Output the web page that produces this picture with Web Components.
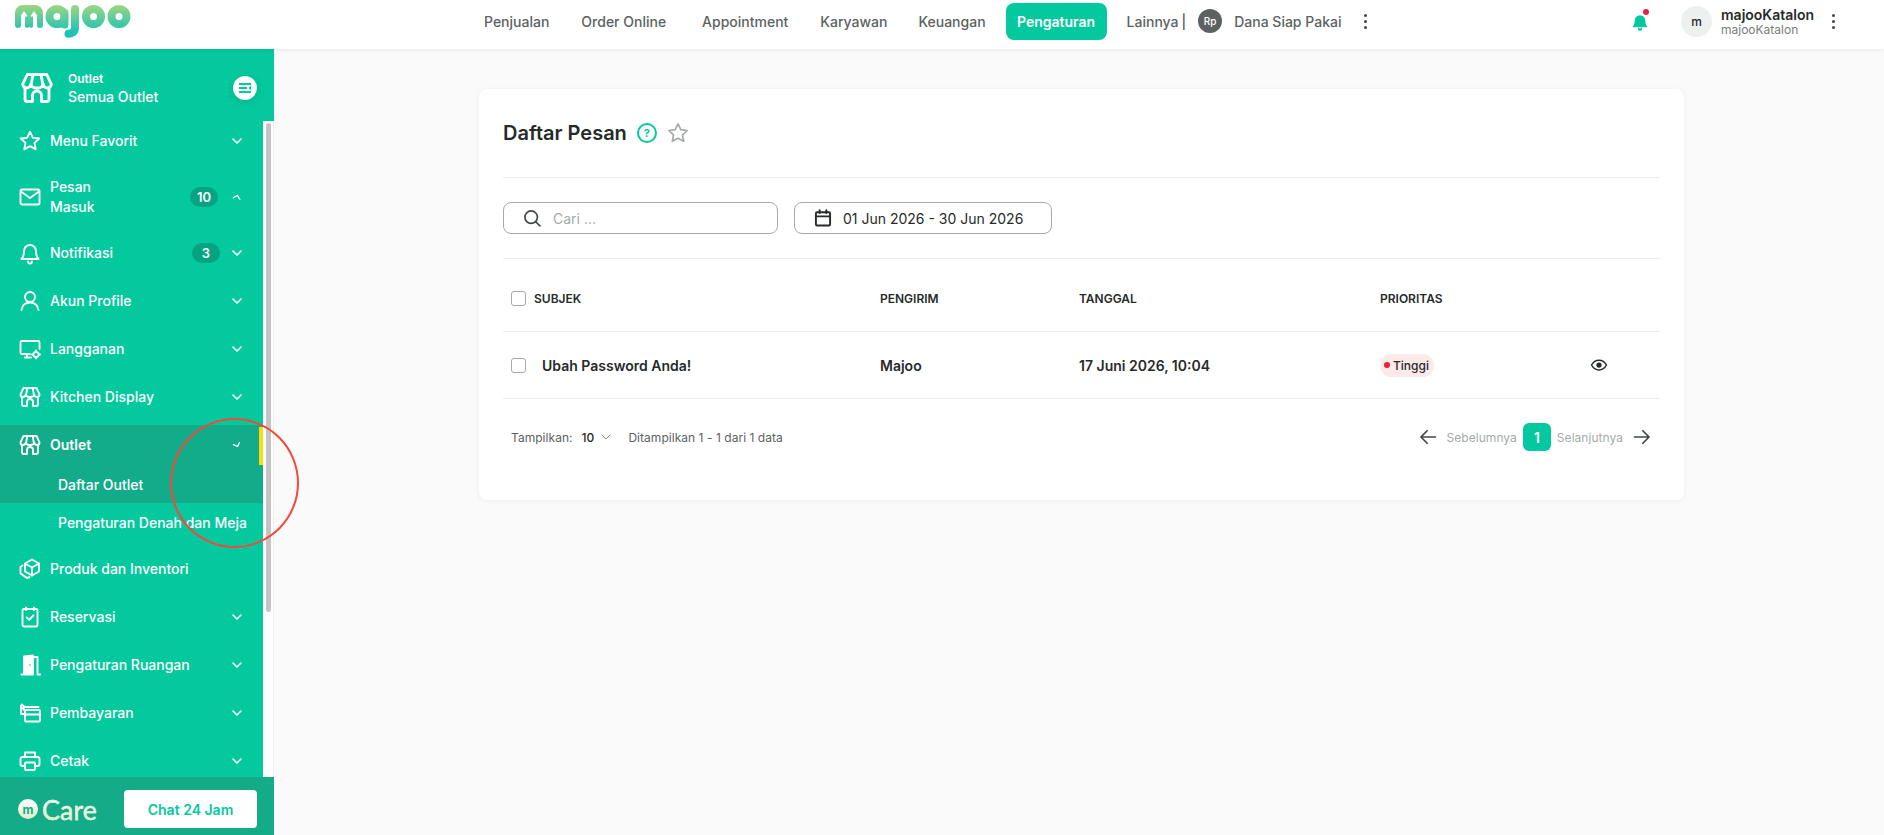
<!DOCTYPE html>
<html lang="id">
<head>
<meta charset="utf-8">
<title>Daftar Pesan</title>
<style>
  html, body { margin: 0; height: 100%; background: #fafafa; overflow: hidden; }
  body { font-family: Inter, "Liberation Sans", sans-serif; color: #272a2a; }
  #app { position: relative; width: 1884px; height: 835px; display: flex; flex-direction: column; overflow: hidden; }
  #body { display: flex; flex: 1; min-height: 0; }
</style>
</head>
<body>
<div id="app">
  <mj-header></mj-header>
  <div id="body">
    <mj-sidebar></mj-sidebar>
    <mj-content>
      <mj-message-card></mj-message-card>
    </mj-content>
  </div>
  <mj-annotation></mj-annotation>
</div>

<script>
const ICONS = {
  store: '<path d="M5.500 3h13l3 6.400c0 1.500-1.200 2.600-2.500 2.600s-2.600-1-2.800-2.600c-.2 1.600-2 2.600-3.200 2.600h-2c-1.200 0-3-1-3.200-2.600C7.600 11 6.300 12 5 12S2.500 10.900 2.500 9.400z"/><path d="M9.300 3 8.200 9.400M14.700 3l1.100 6.400"/><path d="M4 12v7.500A1.500 1.500 0 0 0 5.500 21H9v-4a3 3 0 0 1 6 0v4h3.500a1.500 1.500 0 0 0 1.500-1.500V12"/>',
  star: '<path d="m12 2.800 2.800 5.900 6.400.8-4.700 4.400 1.200 6.400L12 17.200l-5.700 3.100 1.200-6.400-4.700-4.400 6.400-.8z"/>',
  mail: '<rect x="2.500" y="4.500" width="19" height="15" rx="1.800"/><path d="m3 6.500 9 6.500 9-6.500"/>',
  bell: '<path d="M6 10a6 6 0 0 1 12 0c0 5 1 6.500 2.500 8h-17C5 16.500 6 15 6 10z"/><path d="M10 20.500a2 2 0 0 0 4 0"/>',
  bellfill: '<path fill="currentColor" d="M6 10a6 6 0 0 1 12 0c0 5 1 6.500 2.500 8h-17C5 16.500 6 15 6 10z"/><path fill="currentColor" d="M10 20.500a2 2 0 0 0 4 0"/>',
  user: '<circle cx="12" cy="8" r="5"/><path d="M3.500 21c.5-4.500 4-7.500 8.500-7.500s8 3 8.500 7.500"/>',
  monitor: '<path d="M12 17H4a1.500 1.500 0 0 1-1.500-1.500v-10A1.500 1.500 0 0 1 4 4h16a1.500 1.500 0 0 1 1.500 1.500V12"/><path d="M7 20.500h6M9 17v3.500"/><circle cx="18" cy="17.500" r="2.600"/><path d="M18 13.500v1.400M18 20.100v1.400M14 17.500h1.400M20.600 17.500H22"/>',
  box: '<path d="M14 2.500 21 6.500v8L14 18.500l-7-4v-8z"/><path d="m7 6.500 7 4 7-4M14 10.500v8"/><path d="M4.500 8.500 2.500 10v6.500L9 21l2.500-1"/>',
  clipboard: '<rect x="4.500" y="4" width="15" height="17.500" rx="1.500"/><path d="M8 2.500V5M16 2.500V5"/><path d="m8.800 12.500 2.400 2.400 4.200-4.400"/>',
  door: '<path d="M3.500 21.500h2.500V3.500L15 2.500v19H4" fill="currentColor"/><path d="M15 4h4.500v17.500H22"/><circle cx="12" cy="12" r=".8" fill="#04c99e" stroke="none"/>',
  pay: '<path d="M6 9V6h14.500M3 9l3-3.500L4 3.500"/><path d="M3 4.500v8.500h3"/><rect x="7" y="9" width="15" height="11.500" rx="1"/><path d="M7 13.500h15"/>',
  print: '<path d="M7 8V3.500h10V8"/><path d="M7 17H4.500A2 2 0 0 1 2.500 15v-5a2 2 0 0 1 2-2h15a2 2 0 0 1 2 2v5a2 2 0 0 1-2 2H17"/><rect x="7" y="13.500" width="10" height="7.500" rx="1"/>',
  chevron: '<path d="m6 9 6 6 6-6"/>',
  search: '<circle cx="11" cy="11" r="7.500"/><path d="m16.500 16.500 5 5"/>',
  calendar: '<rect x="3.500" y="5" width="17" height="16" rx="1.500"/><path d="M3.500 10h17M8 2.500V6M16 2.500V6"/>',
  eye: '<path d="M2 12c2.500-4.500 6-6.500 10-6.500s7.500 2 10 6.500c-2.500 4.500-6 6.500-10 6.500S4.500 16.500 2 12z"/><circle cx="12" cy="12" r="2.500" fill="currentColor"/>',
  left: '<path d="M21 12H3.500M11 4.500 3.500 12l7.500 7.500"/>',
  right: '<path d="M3 12h17.500M13 4.500l7.500 7.500-7.500 7.500"/>'
};

class MjIcon extends HTMLElement {
  constructor() {
    super();
    this.shadowDOM = this.attachShadow({ mode: "open" });
  }

  connectedCallback() {
    const size = this.getAttribute("size") || 24;
    const stroke = this.getAttribute("stroke") || 2;
    this.shadowDOM.innerHTML = `
      <style>
        :host { display: inline-flex; flex: none; width: ${size}px; height: ${size}px; }
        svg { width: 100%; height: 100%; display: block; }
      </style>
      <svg viewBox="0 0 24 24" fill="none" stroke="currentColor" stroke-width="${stroke}" stroke-linecap="round" stroke-linejoin="round">${ICONS[this.getAttribute("name")] || ""}</svg>`;
  }
}
customElements.define("mj-icon", MjIcon);

class MjHeader extends HTMLElement {
  constructor() {
    super();
    this.shadowDOM = this.attachShadow({ mode: "open" });
    this.shadowDOM.innerHTML = `
      <style>
        :host {
          display: flex; flex: none; align-items: center; height: 49px; background: #fff;
          box-shadow: 0 1px 4px rgba(0,0,0,.07); position: relative; z-index: 2;
          font: 500 14px Inter, "Liberation Sans", sans-serif; color: #5c6262;
        }
        .logo { width: 116px; height: 33px; align-self: flex-start; margin: 5px 0 0 15px; flex: none; }
        nav { display: flex; align-items: center; margin-left: 353px; margin-top: -7px; white-space: nowrap; }
        .on { background: #04c99e; color: #fff; font-weight: 600; width: 101px; height: 37px; border-radius: 8px; display: flex; align-items: center; justify-content: center; }
        .bar { color: #272a2a; font-weight: 400; margin-left: 3px; }
        .rp { width: 24px; height: 24px; border-radius: 50%; background: #5c6262; color: #fff; font-size: 10px; display: flex; align-items: center; justify-content: center; margin-left: 12px; }
        .dots { display: flex; flex-direction: column; gap: 3px; color: #404545; }
        .dots i { width: 3px; height: 3px; border-radius: 50%; background: currentColor; display: block; }
        .right { margin-left: auto; display: flex; align-items: center; margin-top: -6px; padding-right: 49px; }
        .bell { position: relative; color: #04c99e; width: 18px; height: 18px; margin-right: 32px; }
        .bell b { position: absolute; right: 0; top: -4px; width: 6px; height: 6px; border-radius: 50%; background: #e8223c; }
        .avatar { width: 31px; height: 31px; border-radius: 50%; background: #eef0f0; color: #272a2a; font-size: 12px; display: flex; align-items: center; justify-content: center; }
        .who { margin-left: 9px; line-height: 15px; width: 97px; }
        .who div { color: #272a2a; font-weight: 600; }
        .who small { display: block; font-size: 12px; font-weight: 400; color: #777d7d; }
        .right .dots { margin-left: 14px; }
      </style>
      <svg class="logo" viewBox="0 0 116 33">
        <defs><linearGradient id="lg" gradientUnits="userSpaceOnUse" x1="0" y1="0" x2="0" y2="26"><stop offset="0" stop-color="#9ed680"/><stop offset="1" stop-color="#1fc3b5"/></linearGradient></defs>
        <path d="M0 20V8a8 8 0 0 1 8-8h12a8 8 0 0 1 8 8v12a3 3 0 0 1-6 0v-9a3 3 0 0 0-3 0v9a3 3 0 0 1-5 2 3 3 0 0 1-5-2v-9a3 3 0 0 0-3 0v9a3 3 0 0 1-6 0z" fill="url(#lg)"/>
        <path d="M9 22V9M6.300 11.500 9 7.800l2.700 3.700M19 22V9M16.300 11.500 19 7.800l2.700 3.700" fill="none" stroke="#fff" stroke-width="2"/>
        <g fill="none" stroke="url(#lg)" stroke-width="8" stroke-linecap="round">
          <circle cx="42" cy="11.500" r="7.500"/><path d="M49.500 8v11.500"/>
          <path d="M60 4v19c0 3.500-2.500 5.500-6.500 5.700"/>
          <circle cx="78.500" cy="11.500" r="7.500"/><circle cx="104" cy="11.500" r="7.500"/>
        </g>
      </svg>
      <nav>
        <span>Penjualan</span>
        <span style="margin-left:32px">Order Online</span>
        <span style="margin-left:36px">Appointment</span>
        <span style="margin-left:32px">Karyawan</span>
        <span style="margin-left:31px">Keuangan</span>
        <span class="on" style="margin-left:20px">Pengaturan</span>
        <span style="margin-left:20px">Lainnya</span>
        <span class="bar">|</span>
        <span class="rp">Rp</span>
        <span style="margin-left:12px">Dana Siap Pakai</span>
        <span class="dots" style="margin-left:23px"><i></i><i></i><i></i></span>
      </nav>
      <div class="right">
        <span class="bell"><mj-icon name="bellfill" size="18" stroke="2"></mj-icon><b></b></span>
        <span class="avatar">m</span>
        <div class="who"><div>majooKatalon</div><small>majooKatalon</small></div>
        <span class="dots"><i></i><i></i><i></i></span>
      </div>`;
  }
}
customElements.define("mj-header", MjHeader);

class MjNavItem extends HTMLElement {
  constructor() {
    super();
    this.shadowDOM = this.attachShadow({ mode: "open" });
  }

  connectedCallback() {
    const badge = this.getAttribute("badge");
    const chev = this.getAttribute("chevron") || "down";
    const turn = { down: "none", up: "rotate(195deg) scale(.85)", half: "rotate(-20deg) scale(.8)" }[chev];
    const shift = badge && badge.length === 1 ? "margin-right:-2px" : "";
    this.shadowDOM.innerHTML = `
      <style>
        :host {
          display: flex; align-items: center; min-height: 40px; padding-left: 18px; position: relative;
          color: #fff; font-size: 14px; font-weight: 500; line-height: 20px;
        }
        :host([active]) { font-weight: 600; }
        .label { margin-left: 8px; width: var(--label-w, auto); }
        .end { margin-left: auto; display: flex; align-items: center; }
        .badge { background: #06a383; border-radius: 10px; height: 20px; width: 28px; font-size: 13px; font-weight: 600; display: flex; align-items: center; justify-content: center; }
        .chev { margin: 0 18px 0 11px; transform: ${turn}; }
        .mark { position: absolute; right: 0; top: 2px; bottom: 0; width: 4px; background: #f6dd0e; }
      </style>
      <mj-icon name="${this.getAttribute("icon")}" size="24" stroke="1.900"></mj-icon>
      <span class="label"><slot></slot></span>
      <span class="end">
        ${badge ? `<span class="badge" style="${shift}">${badge}</span>` : ""}
        ${chev === "none" ? "" : `<mj-icon class="chev" name="chevron" size="16" stroke="2.400"></mj-icon>`}
      </span>
      ${this.hasAttribute("active") ? '<span class="mark"></span>' : ""}`;
  }
}
customElements.define("mj-nav-item", MjNavItem);

class MjNavSub extends HTMLElement {
  constructor() {
    super();
    this.attachShadow({ mode: "open" }).innerHTML = `
      <style>
        :host { display: flex; align-items: center; height: 38px; padding-left: 58px; color: #fff; font-size: 14px; font-weight: 500; white-space: nowrap; }
      </style>
      <slot></slot>`;
  }
}
customElements.define("mj-nav-sub", MjNavSub);

class MjSidebar extends HTMLElement {
  constructor() {
    super();
    this.shadowDOM = this.attachShadow({ mode: "open" });
    this.shadowDOM.innerHTML = `
      <style>
        :host { display: flex; flex: none; flex-direction: column; width: 274px; background: #04c99e; color: #fff; font-size: 14px; }
        .outlet { display: flex; align-items: center; height: 72px; flex: none; padding: 5px 17px 0 19px; box-sizing: border-box; }
        .outlet .txt { margin-left: 13px; line-height: 18px; font-weight: 500; }
        .outlet small { display: block; font-size: 12px; font-weight: 600; }
        .toggle { margin-left: auto; width: 24px; height: 24px; border-radius: 50%; background: #fff; box-shadow: 0 2px 8px rgba(0,0,0,.12); display: flex; align-items: center; justify-content: center; }
        .middle { flex: 1; min-height: 0; display: flex; }
        .list { width: 263px; flex: none; overflow: hidden; display: flex; flex-direction: column; gap: 8px; }
        .list > * { flex: none; }
        .strip { flex: 1; background: #fff; padding: 2px 2px 0 3px; border-right: 1px solid #eee; }
        .thumb { height: 489px; background: #c4c4c4; border-radius: 3px; }
        .sel { background: #12ac8a; }
        .foot { flex: none; height: 58px; box-sizing: border-box; background: #14ab89; display: flex; align-items: center; padding: 6px 17px 0 18px; }
        .care { display: flex; align-items: center; }
        .m { width: 20px; height: 20px; border-radius: 50%; background: linear-gradient(#fff, #dcefc8); color: #14ab89; font-size: 12px; font-weight: 700; display: flex; align-items: center; justify-content: center; }
        .word { margin-left: 4px; font: 400 27px Lato, "Liberation Sans", sans-serif; background: linear-gradient(#fff, #d5ebc0); -webkit-background-clip: text; background-clip: text; color: transparent; -webkit-text-stroke: .4px #e8f5dc; }
        .chat { margin-left: auto; width: 133px; height: 38px; background: #fff; border-radius: 4px; color: #04c99e; font-weight: 600; display: flex; align-items: center; justify-content: center; }
      </style>
      <div class="outlet">
        <mj-icon name="store" size="36" stroke="1.900"></mj-icon>
        <div class="txt"><small>Outlet</small>Semua Outlet</div>
        <span class="toggle">
          <svg width="14" height="12" viewBox="0 0 14 12"><path d="M1 2h12M1 6h8M1 10h12" stroke="#04c99e" stroke-width="2" fill="none"/><path d="m13 3.500-2.500 2.500 2.500 2.500z" fill="#04c99e"/></svg>
        </span>
      </div>
      <div class="middle">
        <div class="list">
          <mj-nav-item icon="star">Menu Favorit</mj-nav-item>
          <mj-nav-item icon="mail" badge="10" chevron="up" style="--label-w:60px;min-height:56px">Pesan Masuk</mj-nav-item>
          <mj-nav-item icon="bell" badge="3">Notifikasi</mj-nav-item>
          <mj-nav-item icon="user">Akun Profile</mj-nav-item>
          <mj-nav-item icon="monitor">Langganan</mj-nav-item>
          <mj-nav-item icon="store">Kitchen Display</mj-nav-item>
          <div>
            <div class="sel">
              <mj-nav-item icon="store" chevron="half" active>Outlet</mj-nav-item>
              <mj-nav-sub>Daftar Outlet</mj-nav-sub>
            </div>
            <mj-nav-sub>Pengaturan Denah dan Meja</mj-nav-sub>
          </div>
          <mj-nav-item icon="box" chevron="none">Produk dan Inventori</mj-nav-item>
          <mj-nav-item icon="clipboard">Reservasi</mj-nav-item>
          <mj-nav-item icon="door">Pengaturan Ruangan</mj-nav-item>
          <mj-nav-item icon="pay">Pembayaran</mj-nav-item>
          <mj-nav-item icon="print">Cetak</mj-nav-item>
        </div>
        <div class="strip"><div class="thumb"></div></div>
      </div>
      <div class="foot">
        <div class="care"><span class="m">m</span><span class="word">Care</span></div>
        <span class="chat">Chat 24 Jam</span>
      </div>`;
  }
}
customElements.define("mj-sidebar", MjSidebar);

class MjContent extends HTMLElement {
  constructor() {
    super();
    this.attachShadow({ mode: "open" }).innerHTML = `
      <style>
        :host { display: block; flex: 1; min-width: 0; padding: 40px 200px 0 205px; }
      </style>
      <slot></slot>`;
  }
}
customElements.define("mj-content", MjContent);

class MjMessageCard extends HTMLElement {
  constructor() {
    super();
    this.shadowDOM = this.attachShadow({ mode: "open" });
    this.shadowDOM.innerHTML = `
      <style>
        :host {
          display: block; height: 411px; box-sizing: border-box; padding: 0 24px; background: #fff; border-radius: 8px;
          box-shadow: 0 1px 6px rgba(0,0,0,.05); font-size: 14px; color: #272a2a;
        }
        .title { display: flex; align-items: center; height: 88px; border-bottom: 1px solid #eceeee; }
        h1 { margin: 0; font-size: 20px; font-weight: 600; }
        .help { margin-left: 10px; color: #04c99e; width: 20px; height: 20px; border: 2px solid #04c99e; border-radius: 50%; box-sizing: border-box; font-size: 11px; font-weight: 700; display: flex; align-items: center; justify-content: center; }
        .fav { margin-left: 9px; color: #a5abab; }
        .filters { display: flex; align-items: center; gap: 16px; height: 80px; border-bottom: 1px solid #eceeee; }
        .field { box-sizing: border-box; height: 32px; border: 1px solid #a5abab; border-radius: 8px; display: flex; align-items: center; padding-left: 18px; }
        .search { width: 275px; color: #a5abab; }
        .date { width: 258px; color: #272a2a; }
        .field mj-icon { margin-right: 11px; color: #404545; }
        .date mj-icon { color: #272a2a; margin-right: 10px; }
        .row { display: grid; grid-template-columns: 369px 199px 301px 210px 1fr; align-items: center; padding-left: 8px; border-bottom: 1px solid #eceeee; }
        .head { height: 66px; padding-top: 6px; font-size: 12px; font-weight: 600; }
        .item { height: 66px; font-weight: 600; }
        .cell { display: flex; align-items: center; }
        .check { width: 15px; height: 15px; border: 1px solid #a5abab; border-radius: 3px; box-sizing: border-box; flex: none; }
        .head .check { margin-right: 8px; }
        .item .check { margin-right: 16px; }
        .badge { display: inline-flex; align-items: center; height: 23px; width: 54px; box-sizing: border-box; padding-left: 4px; border-radius: 12px; background: #fce9ea; font-size: 12px; font-weight: 500; }
        .badge i { width: 6px; height: 6px; border-radius: 50%; background: #e8223c; margin-right: 3px; }
        .pager { display: flex; align-items: center; height: 76px; padding: 0 8px; font-size: 12px; color: #5c6262; letter-spacing: .04px; }
        .pager .n { margin-left: 9px; color: #272a2a; font-weight: 500; }
        .pager .chev { margin: 0 14px 0 4px; color: #8a9090; }
        .nav { margin-left: auto; display: flex; align-items: center; color: #a5abab; }
        .nav mj-icon { color: #404545; }
        .nav .p { width: 28px; height: 28px; background: #04c99e; color: #fff; border-radius: 6px; font-size: 14px; font-weight: 600; display: flex; align-items: center; justify-content: center; margin: 0 6px; }
      </style>
      <div class="title">
        <h1>Daftar Pesan</h1>
        <span class="help">?</span>
        <mj-icon class="fav" name="star" size="24" stroke="1.700"></mj-icon>
      </div>
      <div class="filters">
        <div class="field search"><mj-icon name="search" size="20" stroke="2"></mj-icon>Cari ...</div>
        <div class="field date"><mj-icon name="calendar" size="20" stroke="2.300"></mj-icon>01 Jun 2026 - 30 Jun 2026</div>
      </div>
      <div class="row head">
        <span class="cell"><span class="check"></span>SUBJEK</span>
        <span>PENGIRIM</span><span>TANGGAL</span><span>PRIORITAS</span><span></span>
      </div>
      <div class="row item">
        <span class="cell"><span class="check"></span>Ubah Password Anda!</span>
        <span>Majoo</span>
        <span>17 Juni 2026, 10:04</span>
        <span class="cell"><span class="badge"><i></i>Tinggi</span></span>
        <mj-icon name="eye" size="18" stroke="2"></mj-icon>
      </div>
      <div class="pager">
        <span>Tampilkan:</span><span class="n">10</span>
        <mj-icon class="chev" name="chevron" size="16" stroke="1.500"></mj-icon>
        <span>Ditampilkan 1 - 1 dari 1 data</span>
        <div class="nav">
          <mj-icon name="left" size="20" stroke="2" style="margin-right:9px"></mj-icon>
          <span>Sebelumnya</span>
          <span class="p">1</span>
          <span>Selanjutnya</span>
          <mj-icon name="right" size="20" stroke="2" style="margin-left:9px"></mj-icon>
        </div>
      </div>`;
  }
}
customElements.define("mj-message-card", MjMessageCard);

// lingkaran merah di atas sidebar, bukan bagian dari layout
class MjAnnotation extends HTMLElement {
  constructor() {
    super();
    this.attachShadow({ mode: "open" }).innerHTML = `
      <style>
        :host { position: absolute; left: 170px; top: 418px; width: 129px; height: 130px; box-sizing: border-box; border: 2.500px solid #f4483a; border-radius: 50%; z-index: 5; pointer-events: none; }
      </style>`;
  }
}
customElements.define("mj-annotation", MjAnnotation);
</script>
</body>
</html>
